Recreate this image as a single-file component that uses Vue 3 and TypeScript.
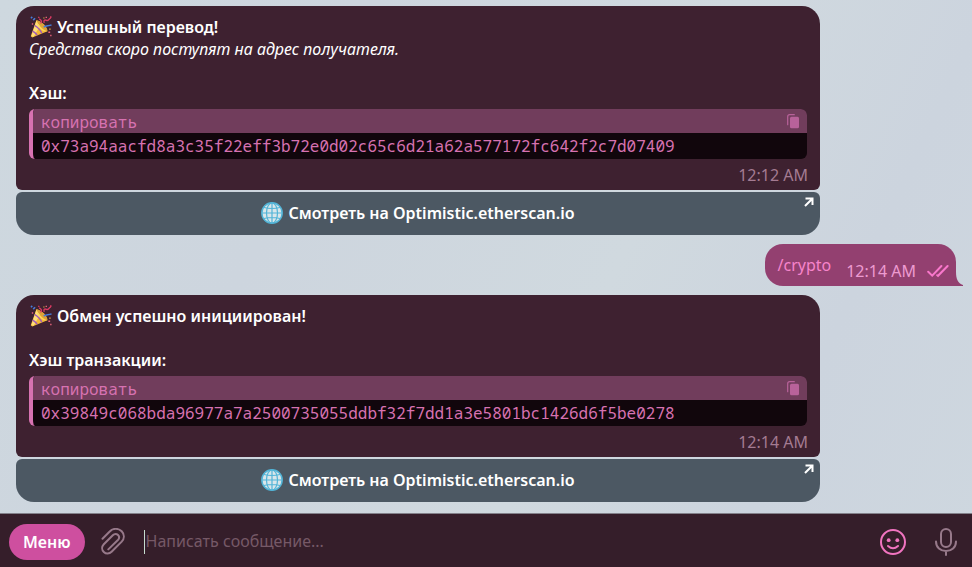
<script setup lang="ts">
import { ref } from 'vue'

interface BotMessage {
  id: number
  title: string
  note?: string
  label: string
  hash: string
  time: string
}

const first: BotMessage = {
  id: 1,
  title: 'Успешный перевод!',
  note: 'Средства скоро поступят на адрес получателя.',
  label: 'Хэш:',
  hash: '0x73a94aacfd8a3c35f22eff3b72e0d02c65c6d21a62a577172fc642f2c7d07409',
  time: '12:12 AM',
}
const second: BotMessage = {
  id: 2,
  title: 'Обмен успешно инициирован!',
  label: 'Хэш транзакции:',
  hash: '0x39849c068bda96977a7a2500735055ddbf32f7dd1a3e5801bc1426d6f5be0278',
  time: '12:14 AM',
}

const thread: (BotMessage | string)[] = [first, '/crypto', second]
const draft = ref('')

function copy(hash: string): void {
  void navigator.clipboard?.writeText(hash)
}
</script>

<template>
  <div class="app">
    <main class="chat">
      <template v-for="(item, i) in thread" :key="i">
        <div v-if="typeof item === 'string'" class="outgoing">
          <span class="command">{{ item }}</span>
          <time class="sent">12:14 AM</time>
          <svg class="checks" viewBox="0 0 22 14" aria-hidden="true">
            <path d="M1.200 7.800 5.200 11.600 14.400 2M10.200 11.200 11 11.800 20.600 2" />
          </svg>
          <svg class="tail" viewBox="0 0 14 14" aria-hidden="true"><path d="M0 0H7C7 7 9 11.500 14 13V14H0Z" /></svg>
        </div>
        <article v-else class="message">
          <div class="card">
            <p class="line strong">
              <svg class="emoji" viewBox="0 0 24 24" aria-hidden="true">
                <path fill="#f3b934" d="M7 4.500C13 6 18 11 19 16.500L2.500 23.500.8 22Z" />
                <path fill="#ffe07a" d="M7 5 11.500 9.500 4 22.600 1.500 22Z" />
                <path fill="none" stroke="#a05cb8" stroke-width="1.500" d="M5.300 10.500C8.500 12.500 11.500 15.500 12.800 18.800M3 16.500C5 17.700 7 19.500 7.800 21" />
                <path fill="#dca338" d="M7 4.500C11 4.500 20 12.500 19 16.500 16 16.500 8 9 7 4.500Z" />
                <path fill="#fdd860" d="M7 4.500C7.500 9 14.500 16 19 16.500 13.500 18 6.500 11 7 4.500Z" />
                <path fill="none" stroke="#d93a62" stroke-width="1.500" d="M11.500 8C13.500 6.500 12.500 4.500 10 3.200M9 1 10.200 2M15.500 7.500C14.500 4.500 16 3.800 18 4.800 20.500 5.800 20 3 22.800 2M22 .8 23.500 1.500" />
                <path fill="none" stroke="#467bd8" stroke-width="1.700" d="M15 12C18 10 20 11.300 23.500 9.700M1 2.500 2.500 1M3.500 4.500 5.500 2.500" />
                <path fill="#e8647c" d="M20 17h2v1.500h-2zM22 20.500h1.500V22H22zM2 8h1.500v1.500H2zM17 .8h1.500v1.500H17z" />
                <path fill="#e9b744" d="M21 13.500h1.500V15H21zM14.500 1.500h1.300v1.300h-1.300z" />
              </svg>
              {{ item.title }}
            </p>
            <p v-if="item.note" class="line note">{{ item.note }}</p>
            <p class="line strong hash-label">{{ item.label }}</p>
            <div class="code">
              <button class="copy" type="button" @click="copy(item.hash)">
                <span>копировать</span>
                <svg class="copy-icon" viewBox="0 0 12 16" aria-hidden="true">
                  <path fill="none" stroke="currentColor" stroke-width="1.200" stroke-linecap="round" d="M.7 10.700V2.700Q.7.700 2.700.700H7.300" />
                  <rect x="3" y="2.800" width="9" height="11.400" rx="1.500" fill="currentColor" />
                </svg>
              </button>
              <code class="hash">{{ item.hash }}</code>
            </div>
            <time class="stamp">{{ item.time }}</time>
          </div>
          <a class="link" href="https://optimistic.etherscan.io">
            <svg class="globe" viewBox="0 0 22 22" aria-hidden="true">
              <circle cx="11" cy="11" r="10.200" fill="#d9e6ea" />
              <g fill="none" stroke="#52b4d7" stroke-width="1.200">
                <ellipse cx="11" cy="11" rx="5.500" ry="10.200" />
                <path d="M11 1V21M1 11H21M3 5.500Q11 7.500 19 5.500M3 16.500Q11 14.500 19 16.500" />
                <circle cx="11" cy="11" r="10.200" stroke-width="1.500" />
              </g>
            </svg>
            Смотреть на Optimistic.etherscan.io
            <svg class="external" viewBox="0 0 10 10" aria-hidden="true"><path d="M1.500 1.500H8.500V8M8.300 1.700 1 9" /></svg>
          </a>
        </article>
      </template>
    </main>

    <form class="composer" @submit.prevent>
      <button class="menu" type="button">Меню</button>
      <button class="icon attach" type="button" aria-label="Прикрепить">
        <svg viewBox="0 0 24 28" aria-hidden="true">
          <path d="M1.500 10.800 8.700 3.500C12-.2 17.600.2 20.700 3.300 23.600 6.400 23.500 10.500 20.700 13.600L10.600 23.800C8.300 26.100 5 26.200 2.800 24 .6 21.800.7 18.400 2.800 16.200L11.800 7.200C13.500 5.500 15.700 5.700 17 7 18.400 8.400 18.300 10.500 16.900 12L7.300 21.400" />
        </svg>
      </button>
      <span class="field">
        <input v-model="draft" type="text" placeholder="Написать сообщение..." aria-label="Сообщение" />
      </span>
      <button class="icon smile" type="button" aria-label="Эмодзи">
        <svg viewBox="0 0 26 26" aria-hidden="true">
          <circle cx="13" cy="13" r="12" />
          <path d="M8 17Q13 21.500 18 17" />
          <circle class="eye" cx="8.700" cy="11.200" r="1.900" />
          <circle class="eye" cx="17.300" cy="11.200" r="1.900" />
        </svg>
      </button>
      <button class="icon mic" type="button" aria-label="Голосовое сообщение">
        <svg viewBox="0 0 22 28" aria-hidden="true">
          <rect x="6" y="1" width="10" height="18" rx="5" />
          <path d="M1 13.500C1 19.500 5.500 23 11 23S21 19.500 21 13.500M11 23V27" />
        </svg>
      </button>
    </form>
  </div>
</template>

<style>
body {
  margin: 0;
}
</style>

<style scoped>
.app {
  display: flex;
  flex-direction: column;
  min-height: 100vh;
  background: linear-gradient(115deg, #ced8df 0%, #cdd5de 30%, #d0d9df 60%, #ccd4de 80%, #ced7df 100%);
  font-family: "Noto Sans", "Open Sans", sans-serif;
  font-size: 16px;
  line-height: 22px;
}

.app * {
  box-sizing: border-box;
}

button,
input {
  margin: 0;
  border: 0;
  padding: 0;
  background: none;
  font: inherit;
}

.chat {
  display: flex;
  flex: 1;
  flex-direction: column;
  gap: 9px;
  padding: 6px 16px 11px;
}

.message {
  display: flex;
  flex-direction: column;
  gap: 2px;
  margin-right: 136px;
}

.card {
  display: flex;
  flex-direction: column;
  border-radius: 18px 18px 6px 6px;
  padding: 10px 12px 4px 13px;
  background: #3e2130;
  color: #fff;
}

.line {
  margin: 0;
}

.strong {
  display: flex;
  align-items: center;
  gap: 4px;
  font-weight: 600;
}

.emoji {
  width: 24px;
  height: 22px;
}

.note {
  font-style: italic;
}

.hash-label {
  margin-top: 22px;
}

.code {
  margin: 5px 1px 0 0;
  overflow: hidden;
  border-left: 4px solid #d772b1;
  border-radius: 6px;
  background: #11060c;
  color: #d772b1;
  font-family: "Noto Sans Mono", "Liberation Mono", monospace;
}

.copy {
  display: flex;
  align-items: center;
  justify-content: space-between;
  width: 100%;
  height: 24px;
  padding: 2px 8px 0;
  background: #713d5c;
  color: #d772b1;
  cursor: pointer;
}

.copy-icon {
  width: 12px;
  height: 16px;
  color: #b8629a;
}

.hash {
  display: block;
  padding: 2px 8px;
  font-family: inherit;
  overflow-wrap: anywhere;
}

.stamp {
  align-self: flex-end;
  margin-top: 5px;
  color: #a47b92;
}

.link {
  position: relative;
  display: flex;
  align-items: center;
  justify-content: center;
  gap: 5px;
  height: 43px;
  border-radius: 6px 6px 18px 18px;
  padding-bottom: 2px;
  background: #4c5863;
  color: #fff;
  font-weight: 600;
  text-decoration: none;
}

.globe {
  width: 22px;
  height: 22px;
}

.external {
  position: absolute;
  top: 5px;
  right: 6px;
  width: 10px;
  height: 10px;
  fill: none;
  stroke: #fff;
  stroke-width: 2;
}

.outgoing {
  position: relative;
  display: flex;
  align-self: flex-end;
  align-items: flex-start;
  height: 42px;
  border-radius: 18px 18px 0 18px;
  padding: 10px 7px 4px 13px;
  background: #934070;
  color: #f784cb;
}

.sent {
  margin: 6px 11px 0 15px;
  color: #ed9bd0;
}

.checks {
  width: 22px;
  height: 14px;
  margin-top: 10px;
  fill: none;
  stroke: #f977cb;
  stroke-width: 2;
  stroke-linecap: round;
}

.tail {
  position: absolute;
  right: -7px;
  bottom: 0;
  width: 14px;
  height: 14px;
  fill: #934070;
}

.composer {
  display: flex;
  align-items: center;
  border-top: 1px solid #83818a;
  padding: 10px 15px 7px 9px;
  background: #351e2a;
}

.menu {
  height: 36px;
  border-radius: 18px;
  padding: 0 14px;
  background: #ce4f9f;
  color: #fff;
  font-weight: 600;
}

.icon {
  display: flex;
  cursor: pointer;
}

.icon svg {
  fill: none;
  stroke: #97798a;
  stroke-width: 2;
  stroke-linecap: round;
}

.attach {
  margin: 0 19px 0 16px;
}

.attach svg {
  width: 24px;
  height: 28px;
}

.field {
  display: flex;
  flex: 1;
  border-left: 1px solid #c5dccf;
}

.field input {
  width: 100%;
  padding: 0 0 2px 1px;
  color: #fff;
  outline: 0;
}

.field input::placeholder {
  color: #765967;
  opacity: 1;
}

.smile svg {
  width: 26px;
  height: 26px;
  stroke: #f174c0;
}

.smile .eye {
  fill: #f174c0;
  stroke: none;
}

.mic {
  margin-left: 29px;
}

.mic svg {
  width: 22px;
  height: 28px;
}
</style>
